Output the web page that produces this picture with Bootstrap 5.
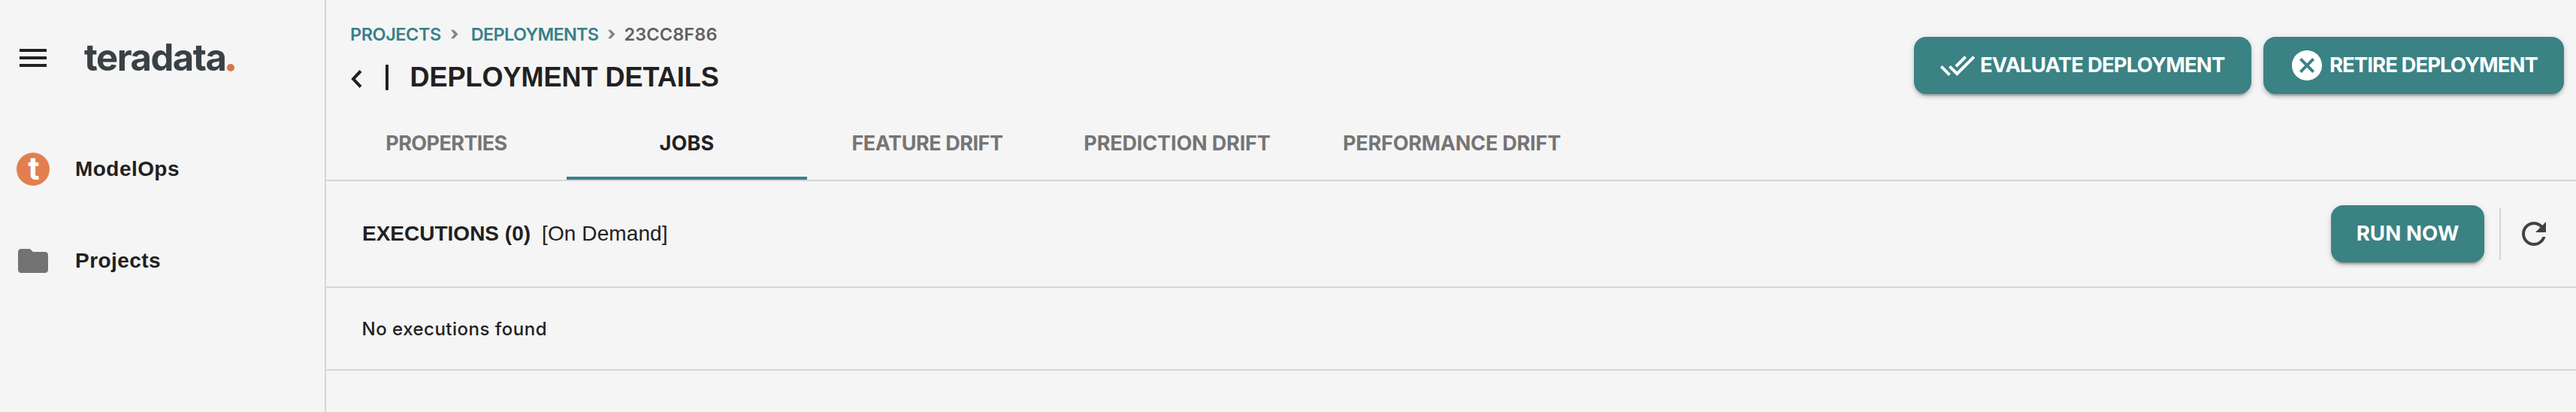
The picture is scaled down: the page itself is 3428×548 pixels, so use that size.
<!DOCTYPE html>
<html lang="en">
<head>
<meta charset="utf-8">
<title>Deployment details</title>
<link rel="stylesheet" href="https://cdn.jsdelivr.net/npm/bootstrap@5.3.0/dist/css/bootstrap.min.css">
<style>
body{background:#f5f5f5;color:#212121;height:548px;overflow:hidden;font-family:"Liberation Sans",Arial,sans-serif;font-size:28px;line-height:40px}
svg{display:block;flex:none}
.side{width:434px;border-right:2px solid #d6d6d6}
.brand-row{height:164px;padding:47px 0 0 26px;gap:50px}
.burger{margin-top:18px}
.wordmark{font:700 49px/60px Inter,sans-serif;color:#394145;letter-spacing:-1.5px}
.wordmark-dot{width:10px;height:10px;background:#d9754c;margin:0 0 12px 2px}
.side-item{height:122px;gap:34px;padding-left:22px;font-weight:700;letter-spacing:.45px}
.side-item.folder{gap:32px;padding-left:20px}
.logo-t{width:44px;height:44px;padding-left:2px;background:#e37f4e;color:#fff;font:700 42px/41px Inter,sans-serif;letter-spacing:0}
.pop{font-family:Inter,sans-serif;font-weight:700}
.head{height:241px;border-bottom:2px solid #d6d6d6}
.crumbs{font-size:23.5px;line-height:30px;padding:31px 0 0 32px;color:#616161;letter-spacing:.12px}
.crumbs.pop{font-weight:600}
.crumbs a{color:#37818a;letter-spacing:-.46px}
.crumbs a.dep{letter-spacing:-.71px}
.crumbs .sep{margin:4px 17px 0 12px}
.crumbs .sep-last{margin-right:11px}
.title-row{padding:8px 0 0 33px;height:76px}
.title-row h1{font-size:36px;font-weight:700;line-height:40px;margin:0 0 0 28.5px}
.back{margin-top:4px}
.bar{width:4px;height:34px;border-radius:1px;background:#212121;margin-left:31px}
.tabs-row{height:102px}
.tabs-row .nav-link{font-size:27px;line-height:40px;color:#757575;padding:34px 0 24px;border-bottom:4px solid transparent;text-align:center;width:320px;letter-spacing:-.2px}
.tabs-row .nav-link.active{color:#212121;border-color:#37818a;letter-spacing:.18px}
.tabs-row .w-prop{letter-spacing:-.6px}
.tabs-row .w-feat{letter-spacing:-.45px}
.tabs-row .w-pred{width:345px;letter-spacing:-.15px}
.tabs-row .w-perf{width:386px}
.act{background:#3a8284;color:#fff;height:76px;border-radius:16px;font-size:27.5px;line-height:40px;border:0;padding:0 0 2px;box-shadow:0 6px 2px -4px rgba(0,0,0,.2),0 4px 4px rgba(0,0,0,.14),0 2px 10px rgba(0,0,0,.12)}
.act svg{margin:2px 6px 0 0}
.act-eval{width:449px;padding-left:34px;letter-spacing:-.83px}
.act-retire{width:400px;padding-left:34px;letter-spacing:-.95px}
.act-run{width:204px;letter-spacing:.14px}
.head-actions{padding:49px 16px 0 0;gap:16px}
.exec{height:142px;border-bottom:2px solid #d6d6d6;padding:0 32px 0 48px}
.demand{margin-left:15px;letter-spacing:.1px}
.vline{width:2px;height:70px;background:#d6d6d6;margin:0 20px}
.empty{height:110px;border-bottom:2px solid #d6d6d6;padding:2px 0 0 47.5px;font-size:24px;letter-spacing:.5px}
.empty.pop{font-weight:500}
</style>
</head>
<body class="d-flex">
<aside class="side flex-shrink-0">
 <div class="brand-row d-flex align-items-start">
  <svg class="burger" width="36" height="24"><path d="M0 0h36v4H0zM0 10h36v4H0zM0 20h36v4H0z" fill="#212121"/></svg>
  <div class="d-flex align-items-end"><span class="wordmark">teradata</span><span class="wordmark-dot rounded-circle"></span></div>
 </div>
 <div class="side-item d-flex align-items-center"><span class="logo-t rounded-circle text-center">t</span><span>ModelOps</span></div>
 <div class="side-item folder d-flex align-items-center">
  <svg width="48" height="48" viewBox="0 0 24 24" fill="#737373"><path d="M10 4H4c-1.1 0-1.99.9-1.99 2L2 18c0 1.100.9 2 2 2h16c1.100 0 2-.9 2-2V8c0-1.100-.9-2-2-2h-8l-2-2z"/></svg><span>Projects</span></div>
</aside>
<main class="flex-grow-1">
 <header class="head d-flex justify-content-between align-items-start">
  <div>
   <div class="crumbs pop d-flex">
    <a class="text-decoration-none">PROJECTS</a>
    <svg class="sep" width="11" height="20" viewBox="0 0 11 20"><path d="M1 4.700h4l5.500 5.800-5.500 5.800H1l4.500-5.800z" fill="#858585"/></svg>
    <a class="dep text-decoration-none">DEPLOYMENTS</a>
    <svg class="sep sep-last" width="11" height="20" viewBox="0 0 11 20"><path d="M1 4.700h4l5.500 5.800-5.500 5.800H1l4.500-5.800z" fill="#858585"/></svg>
    <span>23CC8F86</span>
   </div>
   <div class="title-row d-flex align-items-center">
    <svg class="back" width="15" height="24" viewBox="0 0 15 24"><path d="M13 1.500L3 12l10 10.500" fill="none" stroke="#212121" stroke-width="4"/></svg>
    <span class="bar"></span><h1>DEPLOYMENT DETAILS</h1>
   </div>
   <nav class="tabs-row nav pop">
    <a class="nav-link w-prop">PROPERTIES</a>
    <a class="nav-link active">JOBS</a>
    <a class="nav-link w-feat">FEATURE DRIFT</a>
    <a class="nav-link w-pred">PREDICTION DRIFT</a>
    <a class="nav-link w-perf">PERFORMANCE DRIFT</a>
   </nav>
  </div>
  <div class="head-actions d-flex">
   <button class="act act-eval pop d-flex align-items-center"><svg width="48" height="48" viewBox="0 0 24 24" fill="#fff"><path d="M18 7l-1.410-1.410-6.340 6.340 1.410 1.410L18 7zm4.240-1.410L11.660 16.170 7.480 12l-1.410 1.410L11.660 19l12-12-1.420-1.410zM.41 13.410L6 19l1.410-1.410L1.830 12 .41 13.410z"/></svg>EVALUATE DEPLOYMENT</button>
   <button class="act act-retire pop d-flex align-items-center"><svg width="48" height="48" viewBox="0 0 24 24" fill="#fff"><path d="M12 2C6.470 2 2 6.470 2 12s4.470 10 10 10 10-4.470 10-10S17.530 2 12 2zm5 13.590L15.590 17 12 13.410 8.410 17 7 15.590 10.590 12 7 8.410 8.410 7 12 10.590 15.590 7 17 8.410 13.410 12 17 15.590z"/></svg>RETIRE DEPLOYMENT</button>
  </div>
 </header>
 <section class="exec d-flex align-items-center">
  <strong>EXECUTIONS (0)</strong><span class="demand">[On Demand]</span>
  <button class="act act-run pop ms-auto">RUN NOW</button>
  <span class="vline"></span>
  <svg width="48" height="48" viewBox="0 0 24 24" fill="#424242"><path d="M17.650 6.350C16.200 4.900 14.210 4 12 4c-4.420 0-7.990 3.580-7.990 8s3.570 8 7.990 8c3.730 0 6.840-2.550 7.730-6h-2.080c-.82 2.330-3.040 4-5.650 4-3.310 0-6-2.690-6-6s2.690-6 6-6c1.660 0 3.140.69 4.220 1.780L13 11h7V4l-2.350 2.350z"/></svg>
 </section>
 <section class="empty pop d-flex align-items-center">No executions found</section>
</main>
<script src="https://cdn.jsdelivr.net/npm/bootstrap@5.3.0/dist/js/bootstrap.bundle.min.js"></script>
</body>
</html>
